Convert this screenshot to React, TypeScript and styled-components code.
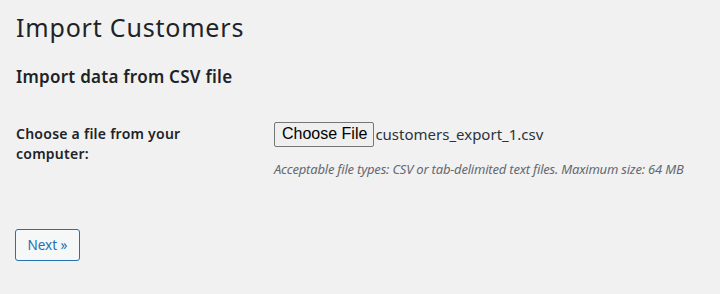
import React from "react";
import styled, { createGlobalStyle } from "styled-components";

const GlobalStyle = createGlobalStyle`
	html, body {
		margin: 0;
		padding: 0;
		background: #f1f1f1;
	}
	body {
		font-family: "Noto Sans", "Open Sans", sans-serif;
		color: #1d2327;
		font-size: 14px;
	}
`;

const Wrap = styled.div`
	padding: 10px 16px 0 16px;
`;

const Title = styled.h1`
	margin: 0;
	padding: 1px 0 4px;
	font-size: 25px;
	font-weight: 400;
	letter-spacing: 0.8px;
	line-height: 1.3;
`;

const Section = styled.h2`
	margin: 18px 0 0;
	font-size: 17px;
	font-weight: 600;
	letter-spacing: 0.25px;
	line-height: 1.3;
`;

const FormRow = styled.div`
	display: grid;
	grid-template-columns: 258px 1fr;
	margin-top: 25px;
`;

const Label = styled.label`
	font-size: 14px;
	font-weight: 600;
	letter-spacing: 0.25px;
	line-height: 20px;
	padding-top: 11px;
	padding-right: 40px;
`;

const Field = styled.div`
	padding-top: 9px;
`;

const FilePicker = styled.div`
	display: flex;
	align-items: center;
	gap: 1px;
`;

const ChooseButton = styled.button`
	font-family: "Liberation Sans", Arial, sans-serif;
	font-size: 16px;
	color: #000;
	background: #efefef;
	border: 1px solid #767676;
	border-radius: 2px;
	height: 25px;
	padding: 0 6px 0 7px;
`;

const FileName = styled.span`
	font-size: 15px;
	color: #2c3338;
`;

const Description = styled.p`
	margin: 13px 0 0;
	font-size: 13px;
	font-style: italic;
	letter-spacing: -0.2px;
	color: #646970;
	line-height: 1.5;
`;

const Actions = styled.div`
	margin-top: 50px;
	margin-left: -1px;
`;

const NextButton = styled.button`
	font-family: "Noto Sans", "Open Sans", sans-serif;
	font-size: 13.5px;
	color: #2271b1;
	background: #f6f7f7;
	border: 1px solid #2271b1;
	border-radius: 3px;
	height: 32px;
	width: 65px;
	padding: 0;
`;

export default function App() {
	return (
		<>
			<GlobalStyle />
			<Wrap>
				<Title>Import Customers</Title>
				<Section>Import data from CSV file</Section>
				<FormRow>
					<Label>Choose a file from your computer:</Label>
					<Field>
						<FilePicker>
							<ChooseButton type="button">Choose File</ChooseButton>
							<FileName>customers_export_1.csv</FileName>
						</FilePicker>
						<Description>
							Acceptable file types: CSV or tab-delimited text files. Maximum size: 64 MB
						</Description>
					</Field>
				</FormRow>
				<Actions>
					<NextButton type="button">Next »</NextButton>
				</Actions>
			</Wrap>
		</>
	);
}
